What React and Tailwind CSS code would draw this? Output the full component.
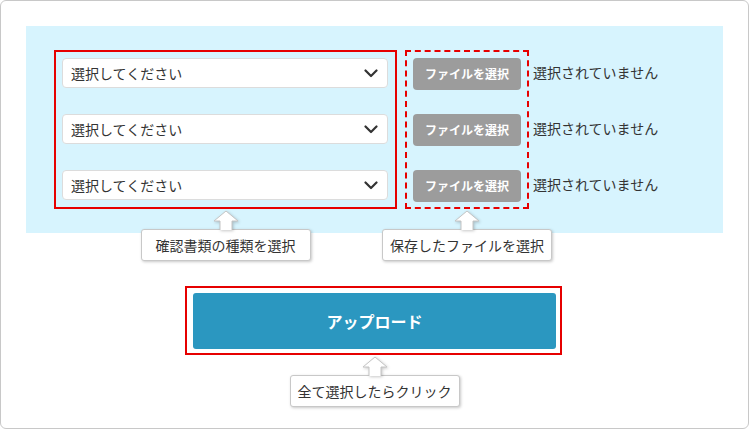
import React from "react";

const font = { fontFamily: '"Noto Sans CJK JP", "Noto Sans", sans-serif' };

function Chevron() {
  return (
    <svg width="14" height="9" viewBox="0 0 14 9" className="shrink-0">
      <polyline points="1.5,1.5 7,7 12.5,1.5" fill="none" stroke="#333" strokeWidth="2.2" strokeLinecap="round" strokeLinejoin="round" />
    </svg>
  );
}

function UpArrow() {
  return (
    <svg width="26" height="20" viewBox="0 0 26 20" className="relative z-10 -mb-[1px] mt-[1px] drop-shadow-[1px_1px_1.5px_rgba(0,0,0,0.22)]">
      <polygon points="13,1 25,11 19,11 19,20 7,20 7,11 1,11" fill="#fff" />
      <path d="M7 20 V11 H1 L13 1 L25 11 H19 V20" fill="none" stroke="#c4c4c4" strokeWidth="1" strokeLinejoin="miter" />
    </svg>
  );
}

function Callout({ children }) {
  return (
    <div className="flex flex-col items-center">
      <UpArrow />
      <div className="w-[170px] h-[32px] shrink-0 flex items-center justify-center bg-white border border-[#c8c8c8] rounded-[3px] shadow-[1px_1px_3px_rgba(0,0,0,0.22)] text-[14px] text-[#333] whitespace-nowrap">
        {children}
      </div>
    </div>
  );
}

export default function App() {
  const rows = [0, 1, 2];
  return (
    <div style={font} className="w-[749px] h-[429px] bg-white border border-[#c8c8c8] rounded-[6px] overflow-hidden">
      <div className="ml-[25px] mt-[25px] w-[697px] h-[207px] bg-[#d7f4fe] flex items-start pl-[28px] pt-[24px]">
        {/* select column */}
        <div className="w-[343px] shrink-0 flex flex-col items-center">
          <div className="w-[343px] h-[159px] border-2 border-[#e60000] pl-[6px] pr-[7px] pt-[6px] flex flex-col gap-[26px]">
            {rows.map((r) => (
              <div key={r} className="h-[30px] bg-white border border-[#dcdcdc] rounded-[4px] flex items-center justify-between pl-[8px] pr-[9px]">
                <span className="text-[14px] text-[#333] leading-none">選択してください</span>
                <Chevron />
              </div>
            ))}
          </div>
          <Callout>確認書類の種類を選択</Callout>
        </div>

        {/* file button column */}
        <div className="w-[124px] shrink-0 ml-[8px] flex flex-col items-center">
          <div className="w-[124px] h-[159px] border-2 border-dashed border-[#e60000] px-[6px] pt-[6px] flex flex-col gap-[24px]">
            {rows.map((r) => (
              <div key={r} className="h-[32px] bg-[#9c9c9c] rounded-[4px] flex items-center justify-center text-white text-[12px] font-bold leading-none">
                ファイルを選択
              </div>
            ))}
          </div>
          <Callout>保存したファイルを選択</Callout>
        </div>

        {/* status text */}
        <div className="ml-[4px] mt-[6px] flex flex-col gap-[24px]">
          {rows.map((r) => (
            <div key={r} className="h-[32px] flex items-center text-[14px] text-[#333] whitespace-nowrap">
              選択されていません
            </div>
          ))}
        </div>
      </div>

      <div className="mt-[53px] flex flex-col items-center">
        <div className="w-[377px] h-[69px] border-2 border-[#e60000] pl-[6px] pr-[4px] pt-[5px] -translate-x-[1px]">
          <div className="w-[363px] h-[56px] bg-[#2b97c0] rounded-[3px] flex items-center justify-center text-white text-[16px] font-bold">
            アップロード
          </div>
        </div>
        <Callout>全て選択したらクリック</Callout>
      </div>
    </div>
  );
}
